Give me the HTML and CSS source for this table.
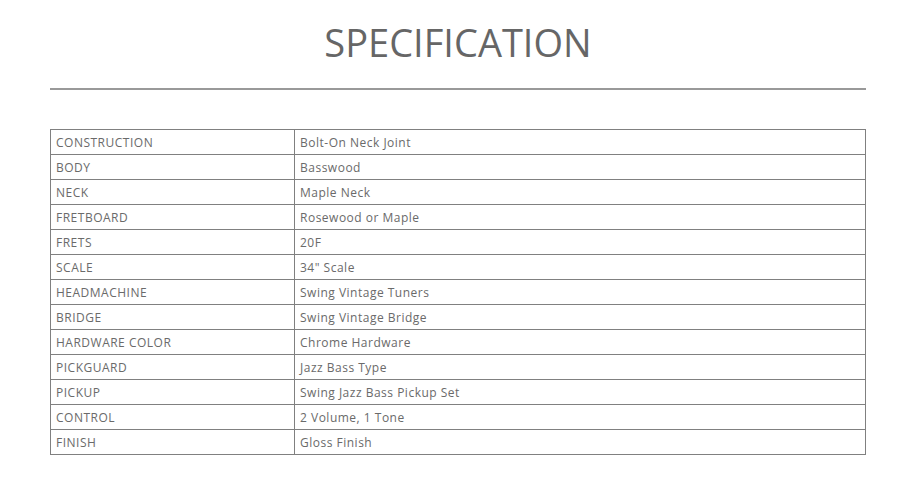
FILE: index.html
```html
<!DOCTYPE html>
<html>
<head>
<meta charset="utf-8">
<link rel="stylesheet" href="styles.css">
</head>
<body>
<div class="wrap">
  <h2 class="title">SPECIFICATION</h2>
  <hr class="rule">
  <table class="spec">
    <tr><td class="k">CONSTRUCTION</td><td>Bolt-On Neck Joint</td></tr>
    <tr><td class="k">BODY</td><td>Basswood</td></tr>
    <tr><td class="k">NECK</td><td>Maple Neck</td></tr>
    <tr><td class="k">FRETBOARD</td><td>Rosewood or Maple</td></tr>
    <tr><td class="k">FRETS</td><td>20F</td></tr>
    <tr><td class="k">SCALE</td><td>34" Scale</td></tr>
    <tr><td class="k">HEADMACHINE</td><td>Swing Vintage Tuners</td></tr>
    <tr><td class="k">BRIDGE</td><td>Swing Vintage Bridge</td></tr>
    <tr><td class="k">HARDWARE COLOR</td><td>Chrome Hardware</td></tr>
    <tr><td class="k">PICKGUARD</td><td>Jazz Bass Type</td></tr>
    <tr><td class="k">PICKUP</td><td>Swing Jazz Bass Pickup Set</td></tr>
    <tr><td class="k">CONTROL</td><td>2 Volume, 1 Tone</td></tr>
    <tr><td class="k">FINISH</td><td>Gloss Finish</td></tr>
  </table>
</div>
</body>
</html>
```

FILE: styles.css
```css
html, body {
  margin: 0;
  padding: 0;
  background: #fff;
}
body {
  font-family: "Open Sans", "Noto Sans", sans-serif;
  color: #666;
}
.wrap {
  width: 816px;
  margin: 0 0 0 50px;
  padding-top: 16px;
}
.title {
  margin: 0;
  text-align: center;
  font-weight: 400;
  font-size: 38px;
  line-height: 52px;
  color: #666;
  letter-spacing: 0;
}
.rule {
  margin: 20px 0 0;
  border: 0;
  height: 2px;
  background: #999;
}
.spec {
  margin-top: 39px;
  width: 816px;
  border-collapse: collapse;
  table-layout: fixed;
}
.spec td {
  border: 1px solid #808080;
  padding: 2px 5px 0;
  font-size: 12px;
  line-height: 22px;
  letter-spacing: 0.5px;
  color: #6a6a6a;
  box-sizing: border-box;
  height: 25px;
}
.spec td.k {
  width: 244px;
}
```
